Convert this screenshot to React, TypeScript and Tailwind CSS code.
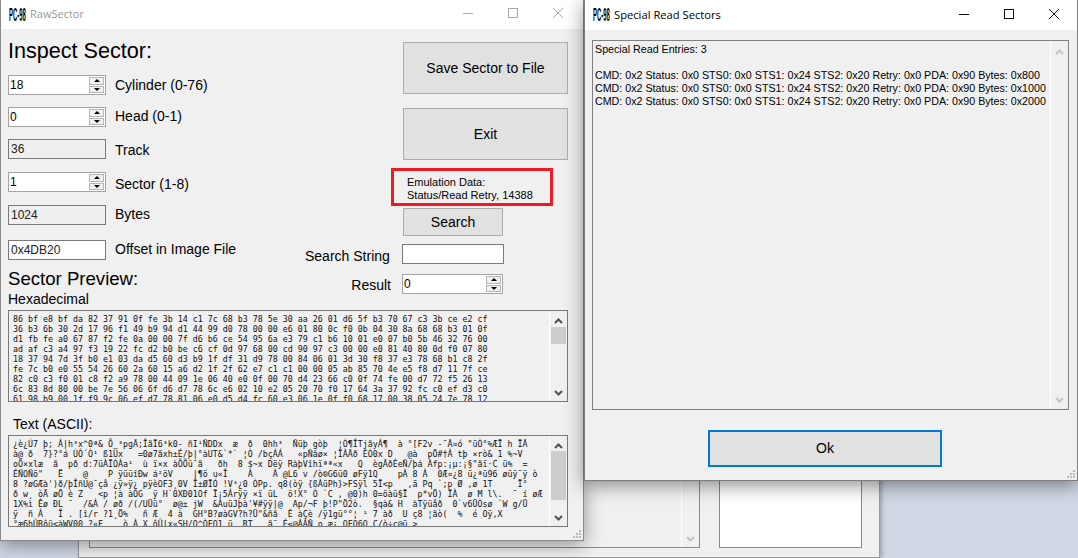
import React from "react";

const hexRows = [
  "86 bf e8 bf da 82 37 91 0f fe 3b 14 c1 7c 68 b3 78 5e 30 aa 26 01 d6 5f b3 70 67 c3 3b ce e2 cf",
  "36 b3 6b 30 2d 17 96 f1 49 b9 94 d1 44 99 d0 78 00 00 e6 01 80 0c f0 0b 04 30 8a 68 68 b3 01 0f",
  "d1 fb fe a0 67 87 f2 fe 0a 00 00 7f d6 b6 ce 54 95 6a e3 79 c1 b6 10 01 e0 07 b0 5b 46 32 76 00",
  "ad af c3 a4 97 f3 19 22 fc d2 b0 be c6 cf 0d 97 68 00 cd 90 97 c3 00 00 e0 81 40 80 0d f0 07 80",
  "18 37 94 7d 3f b0 e1 03 da d5 60 d3 b9 1f df 31 d9 78 00 84 06 01 3d 30 f8 37 e3 78 68 b1 c8 2f",
  "fe 7c b0 e0 55 54 26 60 2a 60 15 a6 d2 1f 2f 62 e7 c1 c1 00 00 05 ab 85 70 4e e5 f8 d7 11 7f ce",
  "82 c0 c3 f0 01 c8 f2 a9 78 00 44 09 1e 06 40 e0 0f 00 70 d4 23 66 c0 0f 74 fe 00 d7 72 f5 26 13",
  "6c 83 8d 80 00 be 7e 56 06 6f d6 d7 78 6c e6 02 10 e2 05 20 70 f0 17 64 3a 37 92 fc c0 ef d3 c0",
  "61 98 b9 00 1f f9 9c 06 ef d7 78 81 06 e0 d5 d4 fc 60 e3 06 1e 0f f0 68 17 00 38 05 24 7e 78 12",
];

const asciiRows = [
  "¿è¿Ú7 þ; Á|h³x^0ª& Õ_³pgÃ;ÎãÏ6³k0- ñI¹ÑDDx  æ  ð  0hh³  Ñüþ gòþ  ¦Ò¶ÎTjãyÁ¶  à °[F2v -¯Ã¤ó \"üÒ°%ÆÏ h ÏÃ",
  "à@ ð  7}?°á ÚÔ´Ò¹ ß1Ûx   =0ø7ãxh±É/þ|°àUT&`*` ¦Ò /bçÁÁ   «pÑâø× ¦ÏÀÃð ÈÒ0x D   @à  pÖ#†À tþ ×rò& 1 %~V",
  "oÕ×xlæ  ã  pð d:7üÀÏÓÀa¹  ù ï×x àÕÕü¯ã   ðh  8 $~x Dëÿ RàþVîhïªª«x   Q  ègÃðÉeÑ/þá Àfp:¡µ:¡§\"ãï·C ü%  =",
  "ÉÑOÑö\"   Ë    @    P ÿüüîÐw á²öV    |¶ö u«Î    À    À @L6 v /ò®G6ü0 øFÿ1Q    pÀ 8 À  0Æ¤¿8 ü¿ªü96 øüÿ¨ÿ ò",
  "8 ?øGÆà')ð/þÎñU@¯çå ¿ÿ»ÿ¿ pÿèOF3¸0V Î±ØÏÓ !V³¿0 ÒPp. q8(òÿ {ßÀüPh}>FSÿl 5Ï<p   ,ä Pq `;p Ø ,ø 1T     Ï°",
  "ð w¸ òÄ øÖ è Z   <p ¦à àÒG  ÿ H`0XÐ01Of Ï¡5Árÿÿ ×ï üL  ö!X° Ò `C , @0)h 0=öàü§Ï  p*vÖ) ÏÀ  ø M l\\.  ¯ í øÆ",
  "1X%ì Êø ÐL ¨  /&À / øð /(/UÜü°  ø@± jW  &ÀuüJþà'¥#ÿÿ|@  Ap/¬F þ!P\"Ö2ò.  §qà& H  àTÿüåð  0`v6ÜÒsø `W g/Ü",
  "ÿ  ñ À   Î . [î/r ?1¸Ö%   ñ Æ  4 à  GH°B?øàGV?h?Ü\"&ñã  È àÇè /ÿ1gü°°¦ ¹ 7 àð  U ç8 ¦ãò(  %  é Oÿ,X",
  "°æ6hÛRôü<àWV00 ?«F    ò À X ôÛ|x«SH/O^ÒFO1 ü  RT   ã¨ É≤@ÀÀÑ o æ¡ OFO6O C/ò÷c@ü >",
];

const entries = ["0x800", "0x1000", "0x2000"];

const Logo = () => (
  <span className="block w-[17px] h-[16px] leading-[16px] whitespace-nowrap font-bold text-[18px] text-black origin-left scale-x-[0.33] font-['Liberation_Sans',sans-serif]">
    PC-98
  </span>
);

const Chevron = ({ up, color }: { up?: boolean; color: string }) => (
  <svg width="9" height="6" viewBox="0 0 9 6" className="block shrink-0">
    <polyline
      points={up ? "1,5 4.5,1.5 8,5" : "1,1 4.5,4.5 8,1"}
      fill="none"
      stroke={color}
      strokeWidth="2"
    />
  </svg>
);

const Spin = () => (
  <div className="w-[15px] h-[16px] mr-[1px] flex flex-col gap-[1px]">
    <div className="flex-1 bg-[#f0f0f0] border border-[#b5b5b5] flex items-center justify-center">
      <div className="w-0 h-0 border-x-[3px] border-x-transparent border-b-[3px] border-b-black" />
    </div>
    <div className="flex-1 bg-[#f0f0f0] border border-[#b5b5b5] flex items-center justify-center">
      <div className="w-0 h-0 border-x-[3px] border-x-transparent border-t-[3px] border-t-black" />
    </div>
  </div>
);

const NumberBox = ({ value, className }: { value: string; className: string }) => (
  <div className={`h-[20px] shrink-0 bg-white border border-[#a3a3a3] flex items-center justify-between pl-[1px] text-[12px] text-black ${className}`}>
    <span>{value}</span>
    <Spin />
  </div>
);

const ReadOnlyBox = ({ value }: { value: string }) => (
  <div className="w-[98px] h-[20px] bg-[#efefef] border border-[#7a7a7a] flex items-center pl-[2px] text-[12px] text-[#222]">
    {value}
  </div>
);

const Row = ({ className, label, labelClass = "", children }: { className: string; label: string; labelClass?: string; children: React.ReactNode }) => (
  <div className={`flex items-center gap-[9px] h-[20px] ${className}`}>
    {children}
    <span className={`text-[14px] leading-[20px] text-black ${labelClass}`}>{label}</span>
  </div>
);

const Scrollbar = ({ thumbTop, thumbHeight }: { thumbTop: string; thumbHeight: string }) => (
  <div className="w-[18px] h-full bg-[#f0f0f0] border-l border-white flex flex-col items-center pt-[7px] pb-[5px]">
    <Chevron up color="#505050" />
    <div className={`w-[15px] bg-[#cdcdcd] ${thumbTop} ${thumbHeight}`} />
    <div className="flex-1" />
    <Chevron color="#505050" />
  </div>
);

const Grip = () => (
  <div className="absolute right-[2px] bottom-[2px] grid grid-cols-3 gap-[1px] w-[8px] h-[8px]">
    {[0, 0, 1, 0, 1, 1, 1, 1, 1].map((on, i) => (
      <div key={i} className={on ? "w-[2px] h-[2px] bg-[#bcbcbc]" : "w-[2px] h-[2px]"} />
    ))}
  </div>
);

const MonoBox = ({ rows, thumbTop, thumbHeight, className }: { rows: string[]; thumbTop: string; thumbHeight: string; className: string }) => (
  <div className={`ml-[7px] w-[560px] h-[92px] shrink-0 border border-[#787878] bg-[#f0f0f0] flex ${className}`}>
    <div className="flex-1 overflow-hidden pl-[4px] pt-[3px] font-['DejaVu_Sans_Mono',monospace] text-[8.3px] leading-[10px] text-[#111] whitespace-pre">
      {rows.map((r, i) => (
        <div key={i}>{r}</div>
      ))}
    </div>
    <Scrollbar thumbTop={thumbTop} thumbHeight={thumbHeight} />
  </div>
);

const WinButton = ({ className, children }: { className: string; children: React.ReactNode }) => (
  <div className={`shrink-0 bg-[#e1e1e1] border border-[#adadad] flex items-center justify-center text-[14px] text-black ${className}`}>
    {children}
  </div>
);

const Caption = ({ color, className }: { color: string; className: string }) => (
  <div className={`flex items-center gap-[35px] ${className}`} style={{ color }}>
    <svg width="10" height="10" viewBox="0 0 10 10"><line x1="0" y1="5.5" x2="10" y2="5.5" stroke="currentColor" /></svg>
    <svg width="10" height="10" viewBox="0 0 10 10"><rect x="0.5" y="0.5" width="9" height="9" fill="none" stroke="currentColor" /></svg>
    <svg width="10" height="10" viewBox="0 0 10 10"><path d="M0 0 L10 10 M10 0 L0 10" stroke="currentColor" /></svg>
  </div>
);

const RawSector = () => (
  <div className="absolute left-0 top-0 w-[584px] h-[541px] bg-[#f0f0f0] border-x border-b border-[#8a8a8a] shadow-[0_4px_18px_rgba(0,0,0,0.4)] flex flex-col">
    <div className="h-[29px] shrink-0 bg-white flex items-center pl-2 pr-[20px]">
      <Logo />
      <span className="ml-[4px] text-[11px] text-[#999] font-['Open_Sans',sans-serif]">RawSector</span>
      <div className="flex-1" />
      <Caption color="#a8a8a8" className="-mt-[3px]" />
    </div>

    <div className="flex h-[263px] shrink-0">
      <div className="w-[304px] pl-[7px]">
        <div className="mt-[10px] h-[24px] leading-[24px] text-[21.6px] text-black">Inspect Sector:</div>
        <Row className="mt-[12px]" label="Cylinder (0-76)"><NumberBox value="18" className="w-[98px]" /></Row>
        <Row className="mt-[12px]" label="Head (0-1)" labelClass="pb-[2px]"><NumberBox value="0" className="w-[98px]" /></Row>
        <Row className="mt-[12px]" label="Track" labelClass="pt-[2px]"><ReadOnlyBox value="36" /></Row>
        <Row className="mt-[13px]" label="Sector (1-8)" labelClass="pt-[4px]"><NumberBox value="1" className="w-[98px]" /></Row>
        <Row className="mt-[13px]" label="Bytes" labelClass="pb-[2px]"><ReadOnlyBox value="1024" /></Row>
        <Row className="mt-[15px]" label="Offset in Image File" labelClass="pb-[2px]">
          <div className="w-[98px] h-[20px] bg-white border border-[#7a7a7a] flex items-center pl-[2px] text-[12px] text-[#222]">0x4DB20</div>
        </Row>
        <div className="mt-[8px] h-[22px] leading-[22px] text-[18.6px] text-black">Sector Preview:</div>
      </div>

      <div className="flex-1 flex flex-col">
        <WinButton className="mt-[13px] ml-[98px] w-[165px] h-[52px] pt-[1px]">Save Sector to File</WinButton>
        <WinButton className="mt-[14px] ml-[98px] w-[165px] h-[52px] pt-[1px]">Exit</WinButton>
        <div className="mt-[8px] ml-[86px] w-[162px] h-[38px] shrink-0 border-[3px] border-[#ed1c24] pl-[13px] pt-[5px] text-[11px] leading-[13px] text-black">
          <div>Emulation Data:</div>
          <div>Status/Read Retry, 14388</div>
        </div>
        <WinButton className="mt-[2px] ml-[98px] w-[100px] h-[28px] pt-[1px]">Search</WinButton>
        <div className="mt-[8px] flex h-[20px] shrink-0">
          <span className="w-[97px] pt-[2px] text-[14px] leading-[20px] text-black">Search String</span>
          <div className="w-[102px] h-[20px] bg-white border border-[#7a7a7a]" />
        </div>
        <div className="mt-[10px] flex h-[20px] shrink-0">
          <span className="w-[86px] text-right pt-[1px] text-[14px] leading-[20px] text-black">Result</span>
          <NumberBox value="0" className="ml-[11px] w-[101px]" />
        </div>
      </div>
    </div>

    <div className="ml-[7px] h-[14px] leading-[14px] text-[14px] text-black">Hexadecimal</div>
    <MonoBox rows={hexRows} thumbTop="mt-[3px]" thumbHeight="h-[17px]" className="mt-[4px]" />
    <div className="ml-[12px] mt-[14px] h-[16px] leading-[16px] text-[14px] text-black">Text (ASCII):</div>
    <MonoBox rows={asciiRows} thumbTop="mt-[2px]" thumbHeight="h-[49px]" className="mt-[3px]" />
    <Grip />
  </div>
);

const SpecialRead = () => (
  <div className="absolute left-[584px] top-0 w-[494px] h-[481px] bg-[#f0f0f0] border border-t-0 border-[#7d7d7d] shadow-[0_4px_18px_rgba(0,0,0,0.45)] flex flex-col font-['Liberation_Sans',sans-serif]">
    <div className="h-[30px] shrink-0 bg-white flex items-center pl-2 pr-[18px]">
      <Logo />
      <span className="ml-[4px] text-[11.2px] text-black font-['Open_Sans',sans-serif]">Special Read Sectors</span>
      <div className="flex-1" />
      <Caption color="#111" className="-mt-[2px]" />
    </div>
    <div className="ml-[7px] mt-[10px] w-[477px] h-[370px] border border-[#7f7f7f] flex">
      <div className="flex-1 pl-[2px] pt-[2px] text-[10.7px] leading-[13px] text-black whitespace-pre">
        <div>Special Read Entries: 3</div>
        <div className="h-[13px]" />
        {entries.map((b) => (
          <div key={b}>{`CMD: 0x2 Status: 0x0 STS0: 0x0 STS1: 0x24 STS2: 0x20 Retry: 0x0 PDA: 0x90 Bytes: ${b}`}</div>
        ))}
      </div>
      <div className="w-[18px] h-full border-l border-white flex flex-col items-center justify-between pt-[8px] pb-[6px]">
        <Chevron up color="#c4c4c4" />
        <Chevron color="#c4c4c4" />
      </div>
    </div>
    <div className="ml-[123px] mt-[20px] w-[234px] h-[37px] bg-[#e1e1e1] border-2 border-[#0078d7] flex items-center justify-center text-[14px] text-black">
      Ok
    </div>
    <Grip />
  </div>
);

const Background = () => (
  <div className="absolute left-[78px] top-[300px] w-[802px] h-[258px] bg-[#f0f0f0] border border-[#999] shadow-[2px_0_4px_rgba(0,0,0,0.25)] flex items-end gap-[19px] pl-[10px] pb-[9px]">
    <div className="w-[611px] h-[240px] border border-[#8a8a8a] flex justify-end">
      <div className="w-[18px] h-full border-l border-white flex flex-col justify-end items-center pb-[5px]">
        <Chevron color="#c4c4c4" />
      </div>
    </div>
    <div className="w-[143px] h-[240px] bg-white border border-[#8a8a8a]" />
  </div>
);

export default function App() {
  return (
    <div className="relative w-[1078px] h-[558px] overflow-hidden bg-[#d0d8e6] font-['Liberation_Sans',sans-serif]">
      <Background />
      <RawSector />
      <SpecialRead />
    </div>
  );
}
